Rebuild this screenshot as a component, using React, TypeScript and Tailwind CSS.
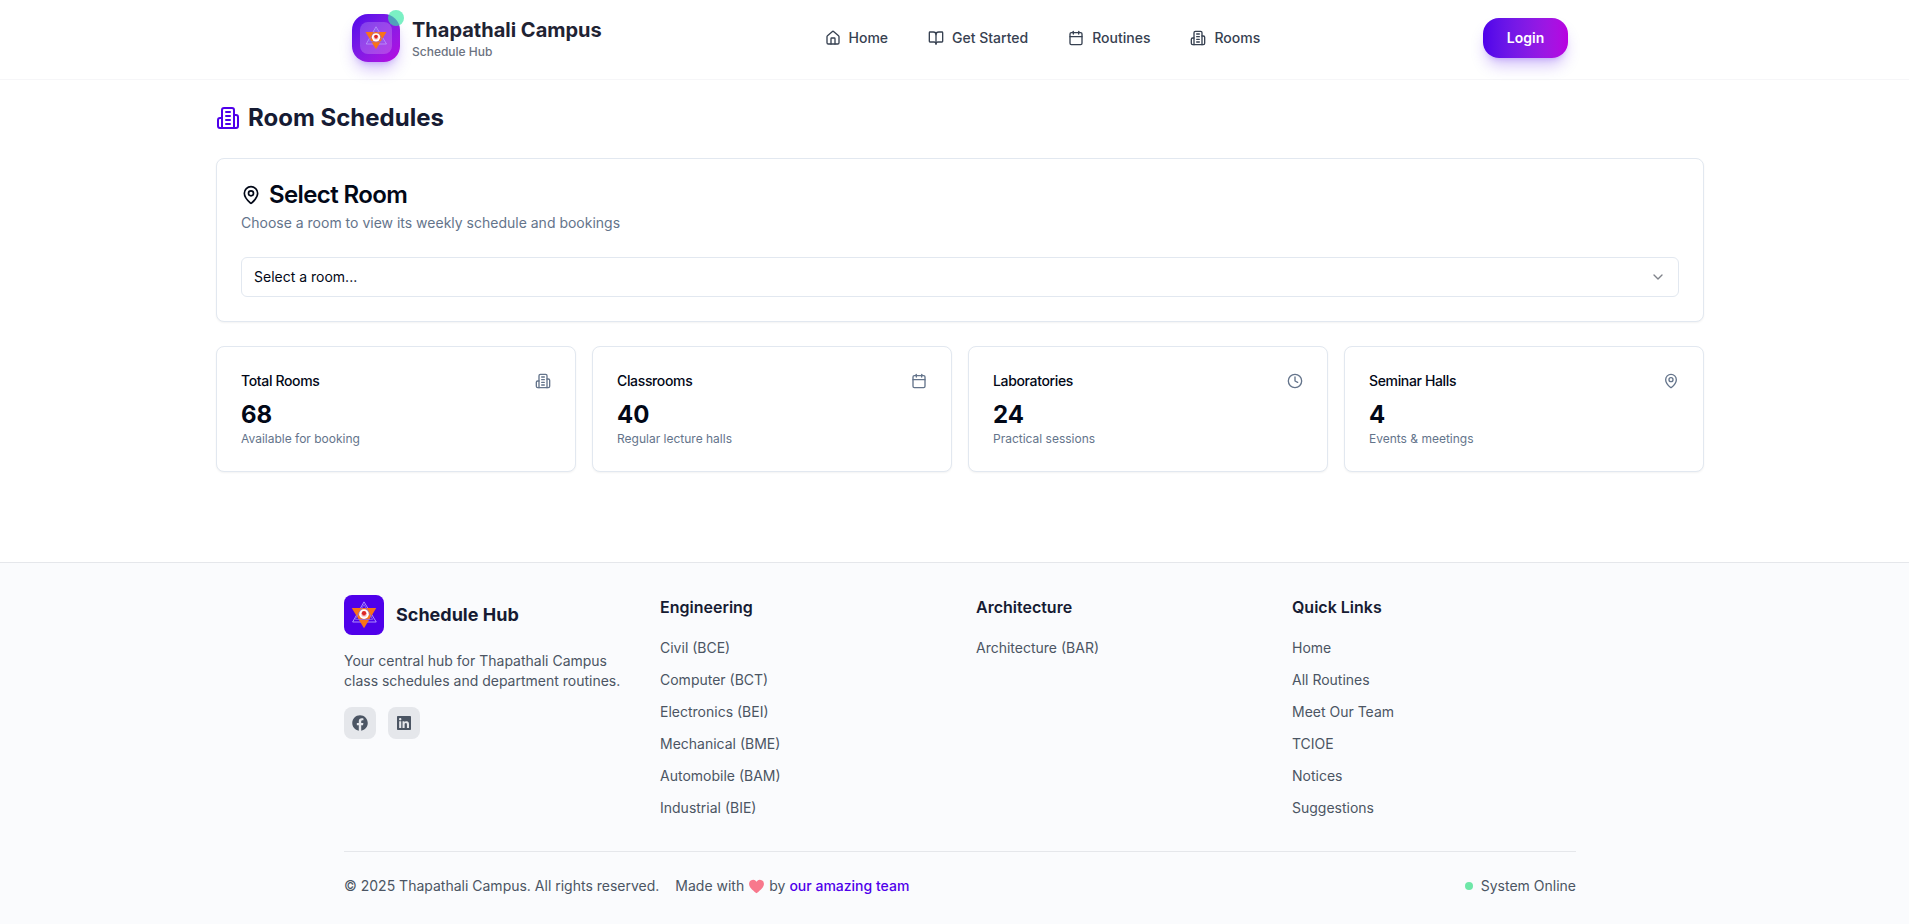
import React from 'react';
import { House, BookOpen, Calendar, MapPin, Clock, ChevronDown } from 'lucide-react';
import { FaFacebook, FaLinkedin } from 'react-icons/fa';

// the tall building2 shape, the package's current one is wider
const Building: React.FC<{ className?: string }> = ({ className }) => (
  <svg className={className} viewBox="0 0 24 24" fill="none" stroke="currentColor" strokeWidth="2" strokeLinecap="round" strokeLinejoin="round">
    <path d="M6 22V4a2 2 0 0 1 2-2h8a2 2 0 0 1 2 2v18Z" />
    <path d="M6 12H4a2 2 0 0 0-2 2v6a2 2 0 0 0 2 2h2" />
    <path d="M18 9h2a2 2 0 0 1 2 2v9a2 2 0 0 1-2 2h-2" />
    <path d="M10 6h4" />
    <path d="M10 10h4" />
    <path d="M10 14h4" />
    <path d="M10 18h4" />
  </svg>
);

const navItems = [
  { label: 'Home', icon: House },
  { label: 'Get Started', icon: BookOpen },
  { label: 'Routines', icon: Calendar },
  { label: 'Rooms', icon: Building },
];

const stats = [
  { title: 'Total Rooms', value: '68', note: 'Available for booking', icon: Building },
  { title: 'Classrooms', value: '40', note: 'Regular lecture halls', icon: Calendar },
  { title: 'Laboratories', value: '24', note: 'Practical sessions', icon: Clock },
  { title: 'Seminar Halls', value: '4', note: 'Events & meetings', icon: MapPin },
];

const footerColumns = [
  {
    title: 'Engineering',
    links: ['Civil (BCE)', 'Computer (BCT)', 'Electronics (BEI)', 'Mechanical (BME)', 'Automobile (BAM)', 'Industrial (BIE)'],
  },
  { title: 'Architecture', links: ['Architecture (BAR)'] },
  { title: 'Quick Links', links: ['Home', 'All Routines', 'Meet Our Team', 'TCIOE', 'Notices', 'Suggestions'] },
];

// campus emblem, drawn by hand
const Emblem: React.FC<{ className?: string }> = ({ className }) => (
  <svg className={className} viewBox="0 0 32 32">
    <path d="M16 1 L30 24 L3 24 Z" fill="none" stroke="#b9a2ff" strokeWidth="1" />
    <path d="M2 8 L30 8 L16 31 Z" fill="#f97316" />
    <path d="M16 4 L26 21 L6 21 Z" fill="none" stroke="#8b6cf0" strokeWidth="1" />
    <circle cx="16" cy="15" r="5.5" fill="#fff" />
    <circle cx="16" cy="15" r="3.5" fill="#fbd5d5" />
    <path d="M13.5 14 a2.5 2.5 0 0 1 5 0 l-1 2.5 h-3 Z" fill="#dc2626" />
  </svg>
);

const Header = () => (
  <header className="h-20 shrink-0 bg-white border-b border-[#f6f6f8]">
    <div className="w-[1216px] mx-auto h-full pb-1 flex items-center justify-between">
      <div className="flex items-center gap-3">
        <div className="relative w-12 h-12 rounded-2xl bg-gradient-to-br from-[#4f00ea] to-[#b800e0] flex items-center justify-center shadow-lg shadow-[#4f00ea]/25">
          <div className="w-8 h-8 rounded-lg bg-white/20 flex items-center justify-center">
            <Emblem className="w-6 h-6" />
          </div>
          <div className="absolute -top-1 -right-1 w-4 h-4 rounded-full bg-[#34e8a4] opacity-65" />
        </div>
        <div>
          <div className="text-xl leading-7 font-bold text-[#1f2333]">Thapathali Campus</div>
          <div className="text-xs leading-4 font-medium text-[#6b7280]">Schedule Hub</div>
        </div>
      </div>
      <nav className="flex items-center gap-4">
        {navItems.map((item) => (
          <a key={item.label} className="flex items-center gap-2 px-3 py-2 text-sm font-medium text-[#374151]">
            <item.icon className="w-4 h-4" />
            <span>{item.label}</span>
          </a>
        ))}
      </nav>
      <button className="h-10 w-[85px] rounded-2xl text-sm font-semibold text-white bg-gradient-to-r from-[#4f00ea] to-[#b800e0] shadow-lg shadow-[#4f00ea]/25">
        Login
      </button>
    </div>
  </header>
);

const Main = () => (
  <main className="flex-1 w-[1488px] mx-auto pt-[22px]">
    <h1 className="flex items-center gap-2 text-2xl font-bold text-[#161b33] mb-6">
      <Building className="w-6 h-6 text-[#4f00ea]" />
      Room Schedules
    </h1>

    {/* Room picker */}
    <div className="rounded-lg border border-[#e2e8f0] bg-white shadow-[0_1px_2px_0_rgb(0,0,0,0.05)] p-6">
      <h2 className="flex items-center gap-2 text-2xl leading-6 font-semibold tracking-tight text-[#020817]">
        <MapPin className="w-5 h-5" />
        Select Room
      </h2>
      <p className="text-sm text-[#64748b] mt-1.5">Choose a room to view its weekly schedule and bookings</p>
      <div className="mt-6 h-10 rounded-md border border-[#e2e8f0] bg-white px-3 flex items-center justify-between text-sm text-[#020817]">
        <span>Select a room...</span>
        <ChevronDown className="w-4 h-4 opacity-50" />
      </div>
    </div>

    {/* Stat cards */}
    <div className="grid grid-cols-4 gap-4 mt-6">
      {stats.map((stat) => (
        <div key={stat.title} className="rounded-lg border border-[#e2e8f0] bg-white shadow-[0_1px_2px_0_rgb(0,0,0,0.05)]">
          <div className="flex items-center justify-between p-6 pb-2">
            <span className="text-sm font-medium tracking-tight text-[#020817]">{stat.title}</span>
            <stat.icon className="w-4 h-4 text-[#64748b]" />
          </div>
          <div className="px-6 pb-6">
            <div className="text-2xl font-bold text-[#020817]">{stat.value}</div>
            <p className="text-xs text-[#64748b]">{stat.note}</p>
          </div>
        </div>
      ))}
    </div>
  </main>
);

const Footer = () => (
  <footer className="shrink-0 bg-[#fafbfd] border-t border-[#e5e7eb]">
    <div className="w-[1232px] mx-auto pt-8 pb-7">
      <div className="grid grid-cols-4 gap-8">
        <div>
          <div className="flex items-center gap-3">
            <div className="w-10 h-10 rounded-lg bg-[#4f00ea] flex items-center justify-center">
              <Emblem className="w-7 h-7" />
            </div>
            <span className="text-lg font-bold text-[#161b33]">Schedule Hub</span>
          </div>
          <p className="text-sm text-[#4b5563] mt-4">
            Your central hub for Thapathali Campus class schedules and department routines.
          </p>
          <div className="flex gap-3 mt-4">
            <a className="w-8 h-8 rounded-lg bg-[#e5e7eb] flex items-center justify-center text-[#4b5563]">
              <FaFacebook className="w-4 h-4" />
            </a>
            <a className="w-8 h-8 rounded-lg bg-[#e5e7eb] flex items-center justify-center text-[#4b5563]">
              <FaLinkedin className="w-4 h-4" />
            </a>
          </div>
        </div>
        {footerColumns.map((col) => (
          <div key={col.title}>
            <h3 className="font-semibold text-[#161b33] mb-[19px]">{col.title}</h3>
            <ul className="space-y-3">
              {col.links.map((link) => (
                <li key={link} className="text-sm text-[#4b5563]">{link}</li>
              ))}
            </ul>
          </div>
        ))}
      </div>
      <div className="mt-[33px] pt-6 border-t border-[#e5e7eb] flex items-center justify-between text-sm text-[#4b5563]">
        <div className="flex items-center gap-4">
          <span>© 2025 Thapathali Campus. All rights reserved.</span>
          <span className="flex items-center gap-1">
            Made with
            <svg className="w-[17px] h-[17px]" viewBox="0 0 24 24">
              <path d="M12 21.5 C5 16 1.5 12.5 1.5 8 A5.7 5.7 0 0 1 12 5.2 A5.7 5.7 0 0 1 22.5 8 C22.5 12.5 19 16 12 21.5 Z" fill="#f8788c" />
            </svg>
            by <a className="font-medium text-[#4f00ea]">our amazing team</a>
          </span>
        </div>
        <div className="flex items-center gap-2">
          <span className="w-2 h-2 rounded-full bg-[#6ee7a8]" />
          System Online
        </div>
      </div>
    </div>
  </footer>
);

export default function App() {
  return (
    <div className="overflow-hidden h-[924px] font-['Inter',sans-serif]">
      <div className="w-[1920px] h-[924px] flex flex-col bg-white">
        <Header />
        <Main />
        <Footer />
      </div>
    </div>
  );
}
